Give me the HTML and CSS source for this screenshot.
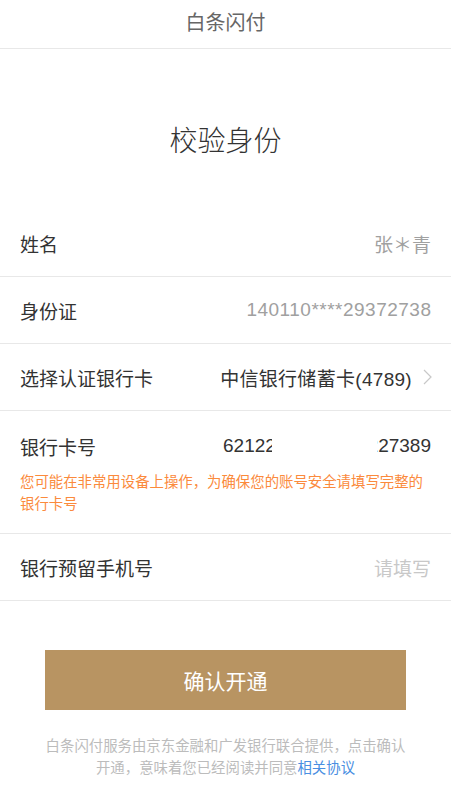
FILE: index.html
```html
<!DOCTYPE html>
<html lang="zh-CN">
<head>
<meta charset="utf-8">
<title>白条闪付</title>
<link rel="stylesheet" href="styles.css">
</head>
<body>
<header class="topbar">白条闪付</header>
<h1 class="title">校验身份</h1>
<div class="form">
  <div class="row">
    <span class="label">姓名</span>
    <span class="value muted">张＊青</span>
  </div>
  <div class="row">
    <span class="label">身份证</span>
    <span class="value muted id">140110****29372738</span>
  </div>
  <div class="row">
    <span class="label">选择认证银行卡</span>
    <span class="value dark">中信银行储蓄卡(4789)</span>
    <svg class="chev" width="9" height="16" viewBox="0 0 9 16"><path d="M1 1 L8 8 L1 15" fill="none" stroke="#c8c8c8" stroke-width="1.2"/></svg>
  </div>
  <div class="row tall">
    <div class="head">
      <span class="label">银行卡号</span>
      <div class="card">
        <span class="part first">6212261</span>
        <span class="part last"><span>227389</span></span>
      </div>
    </div>
    <p class="warn">您可能在非常用设备上操作，为确保您的账号安全请填写完整的银行卡号</p>
  </div>
  <div class="row">
    <span class="label">银行预留手机号</span>
    <span class="value placeholder">请填写</span>
  </div>
</div>
<button class="confirm">确认开通</button>
<p class="note">白条闪付服务由京东金融和广发银行联合提供，点击确认开通，意味着您已经阅读并同意<a class="link">相关协议</a></p>
</body>
</html>
```
FILE: styles.css
```css
* { box-sizing: border-box; }
body {
  margin: 0;
  background: #fff;
  font-family: "Liberation Sans", "Noto Sans CJK SC", sans-serif;
  color: #333;
}
.topbar {
  height: 49px;
  border-bottom: 1px solid #e8e8e8;
  display: flex;
  align-items: center;
  justify-content: center;
  font-size: 20px;
  color: #666;
  padding-bottom: 5px;
}
.title {
  margin: 0;
  padding: 73px 0 48px;
  line-height: 40px;
  font-size: 28px;
  font-weight: 300;
  text-align: center;
  color: #333;
}
.row {
  height: 67px;
  border-bottom: 1px solid #e8e8e8;
  display: flex;
  align-items: center;
  padding: 0 20px;
  font-size: 19px;
}
.label { color: #333; white-space: nowrap; }
.value { margin-left: auto; white-space: nowrap; }
.muted { color: #a0a0a0; }
.id { letter-spacing: 0.5px; margin-right: -0.5px; }
.dark { color: #333; letter-spacing: 0.3px; }
.placeholder { color: #c8c8c8; }
.chev { margin-left: 11px; margin-right: -1px; flex: none; }
.row.tall {
  height: 123px;
  flex-direction: column;
  align-items: stretch;
  justify-content: flex-start;
  padding-top: 20px;
}
.head {
  display: flex;
  align-items: center;
  height: 30px;
}
.card {
  margin-left: auto;
  display: flex;
  gap: 105px;
  color: #333;
}
.part {
  display: flex;
  overflow: hidden;
  white-space: nowrap;
}
.part.first { width: 49px; }
.part.last { width: 54px; justify-content: flex-end; }
.warn {
  margin: 10px 0 0;
  font-size: 14.4px;
  line-height: 22px;
  color: #fb8a3c;
}
.confirm {
  display: block;
  margin: 49px 45px 0;
  width: 361px;
  height: 60px;
  border: none;
  background: #b89462;
  color: #fff;
  font-family: "Liberation Sans", "Noto Sans CJK SC", sans-serif;
  font-size: 21px;
  padding: 0;
}
.note {
  margin: 25px 45px 0;
  font-size: 14.4px;
  line-height: 22px;
  text-align: center;
  color: #bcbcbc;
}
.link { color: #4a8fe2; }
```
